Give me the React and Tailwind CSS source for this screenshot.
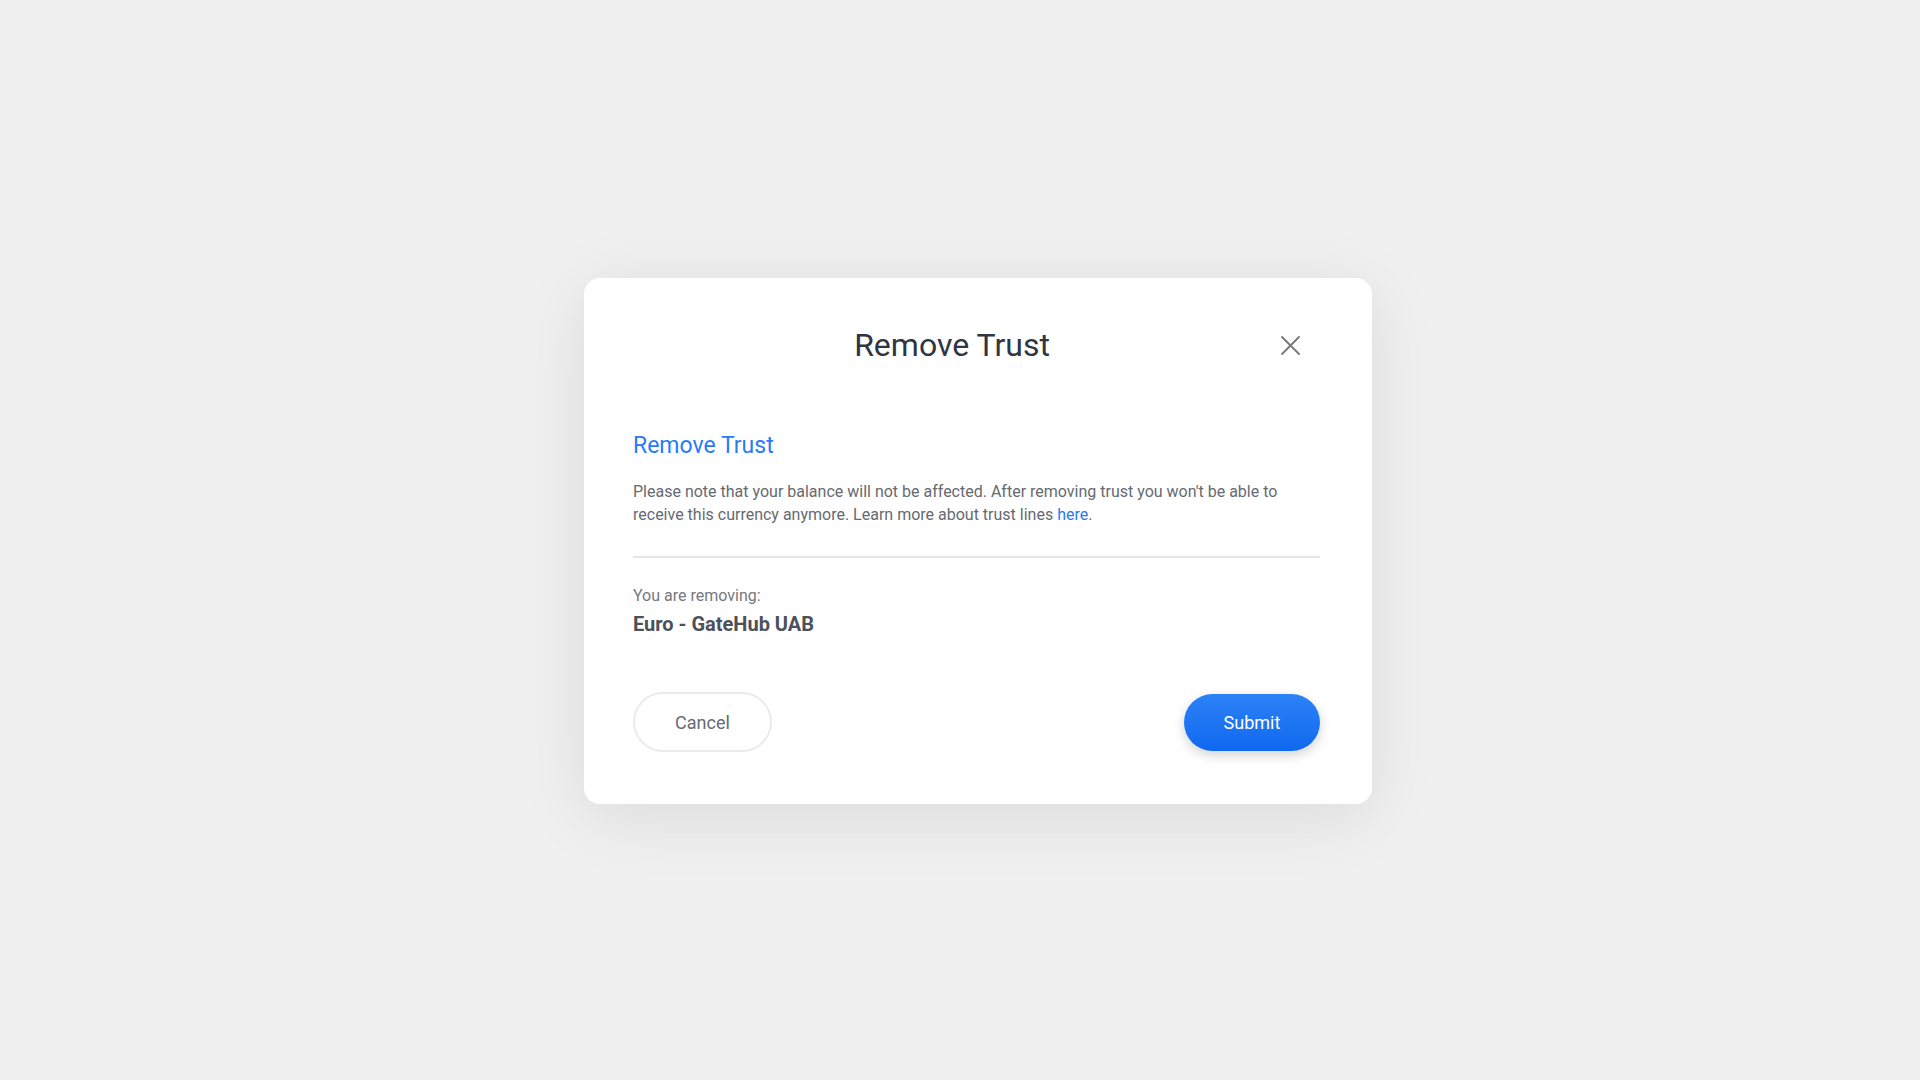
// Confirmation dialog for dropping a trust line
function CloseIcon() {
  return (
    <svg width="19" height="19" viewBox="0 0 19 19" fill="none" stroke="currentColor" strokeWidth="1.9" strokeLinecap="round">
      <path d="M1 1L18 18M18 1L1 18" />
    </svg>
  )
}

function RemoveTrustModal() {
  return (
    <div className="w-[788px] rounded-2xl bg-white pt-[49px] pb-[52px] pl-[49px] pr-[52px] shadow-[0_12px_70px_rgba(0,0,0,0.09)]">
      {/* Header */}
      <div className="flex items-center">
        <h2 className="flex-1 text-center text-[32px] leading-[36px] font-normal text-[#2f3542]">
          Remove Trust
        </h2>
        <button className="flex h-9 w-[49px] items-center pl-[10px] text-[#7a7a7a]">
          <CloseIcon />
        </button>
      </div>

      {/* Body */}
      <h3 className="mt-[69px] text-[23px] leading-[28px] text-[#2a7af5]">Remove Trust</h3>
      <p className="mt-5 text-[16px] leading-[23px] text-[#666a70]">
        Please note that your balance will not be affected. After removing trust you won't be able to
        receive this currency anymore. Learn more about trust lines{' '}
        <a href="#" className="text-[#2a7af5]">here</a>.
      </p>

      <div className="mt-[30px] h-[2px] bg-[#e6e6e6]" />

      <p className="mt-[27px] text-[16px] leading-[22px] text-[#75787d]">You are removing:</p>
      <p className="mt-[4px] text-[20px] leading-[26px] font-bold text-[#4c5058]">Euro - GateHub UAB</p>

      {/* Actions */}
      <div className="mt-[55px] flex items-center justify-between">
        <button className="h-[60px] w-[139px] rounded-full border-2 border-[#ebebeb] bg-white text-[18px] text-[#666a70]">
          Cancel
        </button>
        <button className="h-[57px] w-[136px] rounded-full bg-gradient-to-b from-[#2c82f6] to-[#0f68ef] text-[18px] text-white shadow-[0_4px_12px_rgba(0,0,0,0.18)]">
          Submit
        </button>
      </div>
    </div>
  )
}

export default function App() {
  return (
    <div
      className="flex min-h-screen items-start justify-center bg-[#f0f0f0] pt-[278px]"
      style={{ fontFamily: 'Roboto, "Noto Sans", sans-serif' }}
    >
      <div className="ml-[36px]">
        <RemoveTrustModal />
      </div>
    </div>
  )
}
